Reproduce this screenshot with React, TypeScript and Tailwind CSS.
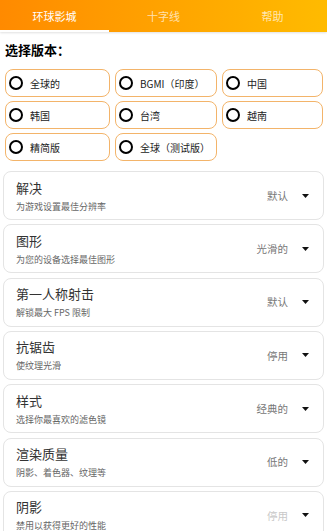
import React from "react";

const versions = ["全球的", "BGMI（印度）", "中国", "韩国", "台湾", "越南", "精简版", "全球（测试版）"];

const settings = [
    { title: "解决", desc: "为游戏设置最佳分辨率", value: "默认" },
    { title: "图形", desc: "为您的设备选择最佳图形", value: "光滑的" },
    { title: "第一人称射击", desc: "解锁最大 FPS 限制", value: "默认" },
    { title: "抗锯齿", desc: "使纹理光滑", value: "停用" },
    { title: "样式", desc: "选择你最喜欢的滤色镜", value: "经典的" },
    { title: "渲染质量", desc: "阴影、着色器、纹理等", value: "低的" },
    { title: "阴影", desc: "禁用以获得更好的性能", value: "停用", disabled: true },
];

const tabs = ["环球影城", "十字线", "帮助"];

const App = () => {
    return (
        <div
            className="w-[327px] h-[531px] overflow-hidden bg-white"
            style={{ fontFamily: '"Noto Sans CJK SC", "Noto Sans", sans-serif' }}
        >
            <div className="flex h-8 bg-gradient-to-r from-[#ff8a00] to-[#ffbb00] shadow-[0_1px_2px_rgba(0,0,0,0.12)]">
                {tabs.map((t, i) => (
                    <div
                        key={t}
                        className={`relative flex-1 flex items-center justify-center text-[11px] ${i === 0 ? "text-white" : "text-white/70"}`}
                    >
                        {t}
                        {i === 0 && <div className="absolute left-0 right-0 bottom-0 h-[2px] bg-white" />}
                    </div>
                ))}
            </div>

            <div className="px-[5px] pt-[9px] text-[13px] font-bold text-black leading-[18px]">选择版本：</div>

            <div className="grid grid-cols-[105px_102px_101px] gap-x-[5px] gap-y-[4px] px-[5px] mt-[10px]">
                {versions.map((v) => (
                    <div
                        key={v}
                        className="flex items-center h-[28px] rounded-[8px] border border-[#f3b46a] pl-[3px]"
                    >
                        <span className="w-[14px] h-[14px] rounded-full border-2 border-black shrink-0" />
                        <span className="ml-[7px] text-[10px] text-[#222]">{v}</span>
                    </div>
                ))}
            </div>

            <div className="flex flex-col gap-[4.33px] px-[3px] mt-[10px]">
                {settings.map((s) => (
                    <div
                        key={s.title}
                        className="flex items-center h-[49px] shrink-0 rounded-[8px] border border-[#e4e4e4] pl-[12px] pr-[14px]"
                    >
                        <div className="flex-1 flex flex-col">
                            <span className="text-[13px] leading-[17px] text-[#333]">{s.title}</span>
                            <span className="mt-[5px] text-[9px] leading-[12px] text-[#666]">{s.desc}</span>
                        </div>
                        <span className={`text-[10.5px] ${s.disabled ? "text-[#c8c8c8]" : "text-[#777]"}`}>{s.value}</span>
                        <svg className="ml-[14px]" width="7" height="4" viewBox="0 0 7 4">
                            <path d="M0 0 L7 0 L3.5 4 Z" fill="#111" />
                        </svg>
                    </div>
                ))}
            </div>
        </div>
    );
};

export default App;
